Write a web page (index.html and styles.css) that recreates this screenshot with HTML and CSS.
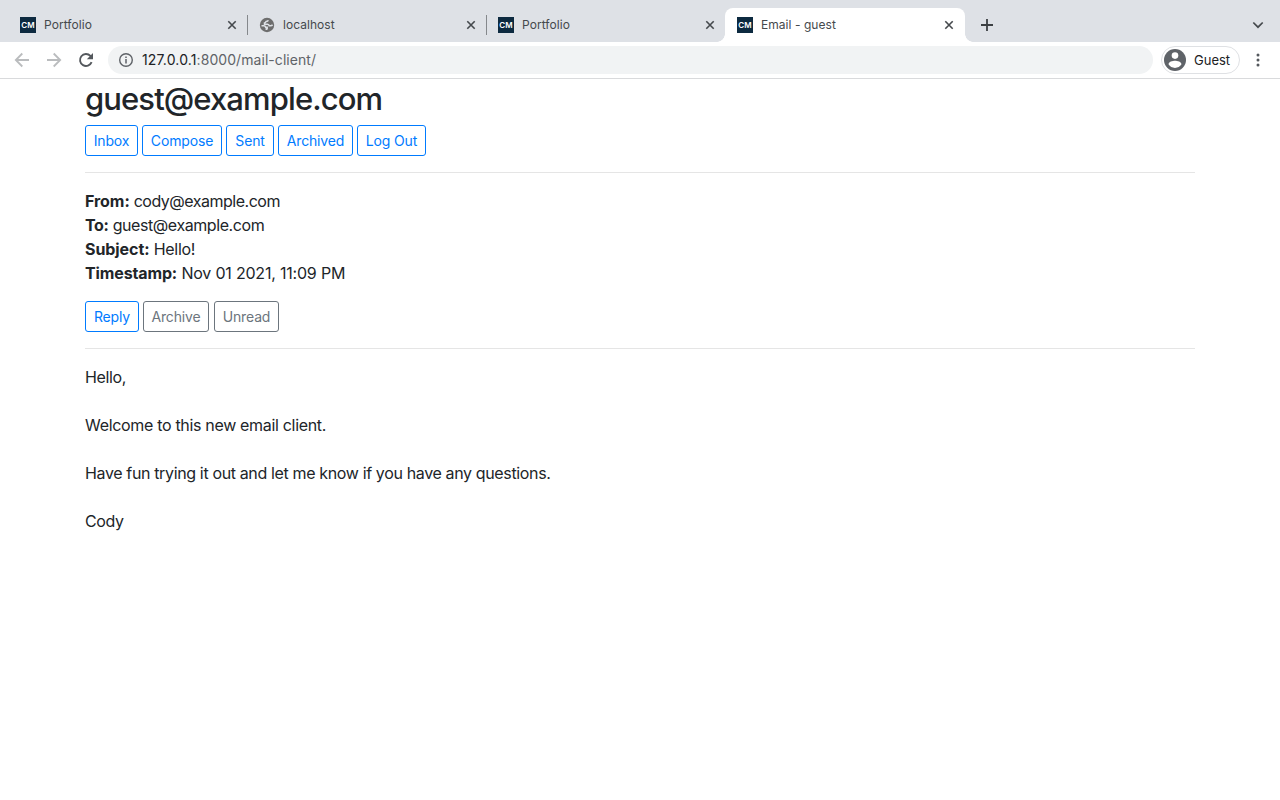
FILE: index.html
```html
<!DOCTYPE html>
<html lang="en">
<head>
<meta charset="utf-8">
<title>Email - guest</title>
<link rel="stylesheet" href="styles.css">
</head>
<body>
<svg class="sprite" aria-hidden="true">
  <symbol id="close" viewBox="0 0 10 10"><path d="M1.3 1.3 8.7 8.7M8.7 1.3 1.3 8.7" fill="none" stroke="#45494d" stroke-width="1.6"/></symbol>
</svg>
<header class="browser">
  <div class="tabs">
    <div class="tab"><span class="favicon">CM</span><span class="title">Portfolio</span><svg class="close"><use href="#close"/></svg></div>
    <div class="tab divided">
      <svg class="globe" viewBox="0 0 16 16"><circle cx="8" cy="8" r="7.200" fill="#6e6e6e"/><path d="M9.300 3.200c-.3 1-1.100 1.300-2.300 1.400-.2.900-.6 1.200-1.500 1.300v1.300h3c1.300.1 1.600.7 1.700 1.600h1.500c.9 0 1.400-.4 1.900-1.100M2.500 8.700h2.400c1.100.1 1.500.6 1.700 1.500h1.600v1.600h-.9v1.300" fill="none" stroke="#dee1e6" stroke-width="1.500"/></svg>
      <span class="title">localhost</span><svg class="close"><use href="#close"/></svg></div>
    <div class="tab divided"><span class="favicon">CM</span><span class="title">Portfolio</span><svg class="close"><use href="#close"/></svg></div>
    <div class="tab active"><span class="favicon">CM</span><span class="title">Email - guest</span><svg class="close"><use href="#close"/></svg></div>
    <svg class="plus" viewBox="0 0 12 12"><path d="M6 0v12M0 6h12" stroke="#3c4043" stroke-width="1.8"/></svg>
    <svg class="chevron" viewBox="0 0 12 8"><path d="m1.300 1.500 4.700 4.700 4.700-4.700" fill="none" stroke="#45494d" stroke-width="1.700"/></svg>
  </div>
  <div class="toolbar">
    <svg class="nav" viewBox="0 0 16 16"><path d="M15 8H2M8.300 1.500 1.800 8l6.500 6.500" fill="none" stroke="#babcbe" stroke-width="1.800"/></svg>
    <svg class="nav" viewBox="0 0 16 16"><path d="M1 8h13M7.700 1.500 14.200 8l-6.500 6.500" fill="none" stroke="#babcbe" stroke-width="1.800"/></svg>
    <svg class="nav" viewBox="0 0 16 16"><path d="M13.600 10.200A6 6 0 1 1 12.400 3.900L13.600 5.200" fill="none" stroke="#54585d" stroke-width="1.900"/><path d="M15 1v6.200H8.800Z" fill="#54585d"/></svg>
    <div class="address">
      <svg class="info" viewBox="0 0 16 16"><circle cx="8" cy="8" r="6.300" fill="none" stroke="#5f6368" stroke-width="1.400"/><path d="M8 7v4.500M8 4.500v1.500" stroke="#5f6368" stroke-width="1.500"/></svg>
      <span class="url"><span class="host">127.0.0.1</span>:8000/mail-client/</span>
    </div>
    <div class="profile">
      <svg class="avatar" viewBox="0 0 22 22"><circle cx="11" cy="11" r="11" fill="#5f6368"/><circle cx="11" cy="6.600" r="3.300" fill="#fff"/><path d="M4.500 15.300c0-2.400 4.200-3.500 6.500-3.500s6.500 1.100 6.500 3.500c-1.400 2.200-3.800 3.600-6.500 3.600s-5.100-1.400-6.500-3.600Z" fill="#fff"/></svg>
      <span class="guest">Guest</span>
    </div>
    <svg class="dots" viewBox="0 0 4 14"><g fill="#54585d"><circle cx="2" cy="2" r="1.500"/><circle cx="2" cy="7" r="1.500"/><circle cx="2" cy="12" r="1.500"/></g></svg>
  </div>
</header>
<main class="container">
  <h2 class="account">guest@example.com</h2>
  <nav class="buttons">
    <button class="btn inbox">Inbox</button>
    <button class="btn compose">Compose</button>
    <button class="btn sent">Sent</button>
    <button class="btn archived">Archived</button>
    <button class="btn logout">Log Out</button>
  </nav>
  <hr class="rule">
  <ul class="details">
    <li class="from"><strong>From:</strong> cody@example.com</li>
    <li class="to"><strong>To:</strong> guest@example.com</li>
    <li class="subject"><strong>Subject:</strong> Hello!</li>
    <li class="time"><strong>Timestamp:</strong> Nov 01 2021, 11:09 PM</li>
  </ul>
  <div class="buttons actions">
    <button class="btn reply">Reply</button>
    <button class="btn muted archive">Archive</button>
    <button class="btn muted unread">Unread</button>
  </div>
  <hr class="rule">
  <div class="message">
    <p>Hello,</p>
    <p class="welcome">Welcome to this new email client.</p>
    <p>Have fun trying it out and let me know if you have any questions.</p>
    <p>Cody</p>
  </div>
</main>
</body>
</html>
```

FILE: styles.css
```css
* { box-sizing: border-box; }
body { margin: 0; background: #fff; color: #212529; font: 16px/24px Inter, "Liberation Sans", sans-serif; }
svg { display: block; flex: none; }
.sprite { display: none; }

.tabs { display: flex; align-items: flex-end; height: 42px; padding-left: 8px; background: #dee1e6; }
.tab { position: relative; display: flex; align-items: center; width: 239px; height: 34px; padding: 0 10px 0 12px; }
.divided::before { content: ""; position: absolute; left: 0; top: 7px; width: 1px; height: 20px; background: #85888c; }
.active { width: 240px; padding-right: 11px; background: #fff; border-radius: 8px 8px 0 0; }
.active::before, .active::after { content: ""; position: absolute; bottom: 0; width: 8px; height: 8px; }
.active::before { left: -8px; background: radial-gradient(circle at 0 0, #dee1e6 7.5px, #fff 8px); }
.active::after { right: -8px; background: radial-gradient(circle at 100% 0, #dee1e6 7.5px, #fff 8px); }
.favicon { width: 16px; height: 16px; background: #0d2a40; color: #fff; font: 600 8px/17px Inter, sans-serif; text-align: center; }
.globe { width: 16px; height: 16px; }
.title { flex: 1; margin-left: 8px; color: #45494d; font-size: 12px; line-height: 16px; letter-spacing: .05px; white-space: nowrap; }
.close { width: 10px; height: 10px; }
.plus { width: 12px; height: 12px; margin: 0 0 11px 16px; }
.chevron { width: 12px; height: 8px; margin: 0 16px 13px auto; }

.toolbar { display: flex; align-items: center; height: 37px; padding-left: 14px; border-bottom: 1px solid #d9dadc; background: #fff; }
.nav { width: 16px; height: 16px; margin-right: 16px; }
.address { display: flex; align-items: center; width: 1045px; height: 28px; margin-left: -2px; padding-left: 10px; border-radius: 14px; background: #f1f3f4; }
.info { width: 16px; height: 16px; }
.url { margin-left: 8px; color: #5f6368; font-size: 14px; letter-spacing: .06px; }
.host { color: #202124; letter-spacing: .15px; }
.profile { display: flex; align-items: center; width: 79px; height: 28px; margin-left: 8px; padding-left: 2px; border: 1px solid #dfe1e4; border-radius: 14px; }
.avatar { width: 22px; height: 22px; }
.guest { margin-left: 8px; color: #202124; font-size: 13px; line-height: 20px; }
.dots { width: 4px; height: 14px; margin-left: 16px; }

.container { width: 1110px; margin: 0 auto; padding-top: 1px; }
.account { margin: 0 0 6.6px; font-size: 31px; line-height: 38.4px; font-weight: 500; letter-spacing: -.9px; }
.buttons { display: flex; gap: 4px; }
.btn { height: 31px; padding: 0; border: 1px solid #007bff; border-radius: 3px; background: transparent; color: #007bff; font: 14px/21px Inter, sans-serif; letter-spacing: -.15px; white-space: nowrap; }
.muted { border-color: #6c757d; color: #6c757d; }
.inbox { width: 53px; }
.compose { width: 80px; }
.sent { width: 48px; }
.archived { width: 75px; }
.logout { width: 69px; }
.reply { width: 54px; }
.archive { width: 66px; }
.unread { width: 65px; margin-left: 1px; }
.rule { height: 1px; margin: 16px 0; border: 0; background: #e5e5e5; }
.details { margin: 0 0 16px; padding: 0; list-style: none; letter-spacing: -.3px; }
.details strong { letter-spacing: -.06px; }
.from { letter-spacing: -.49px; }
.to { letter-spacing: -.42px; }
.to strong { letter-spacing: -.35px; }
.time { letter-spacing: -.2px; }
.time strong { letter-spacing: -.13px; }
.message { display: grid; gap: 24px; letter-spacing: -.36px; }
.message p { margin: 0; }
.message .welcome { letter-spacing: -.32px; }
```
